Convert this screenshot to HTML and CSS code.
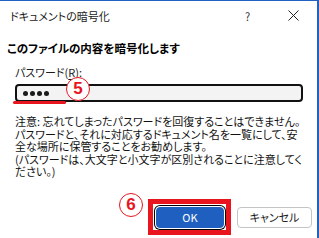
FILE: index.html
```html
<!DOCTYPE html>
<html lang="ja">
<head>
<meta charset="utf-8">
<link rel="stylesheet" href="styles.css">
</head>
<body>
<div class="window">
  <header class="titlebar">
    <span class="title">ドキュメントの暗号化</span>
    <span class="help">?</span>
    <span class="close"><svg width="11" height="11" viewBox="0 0 11 11"><path d="M0.5 0.5 L10.5 10.5 M10.5 0.5 L0.5 10.5" stroke="#222" stroke-width="1" fill="none"/></svg></span>
  </header>
  <main class="content">
    <h1 class="heading">このファイルの内容を暗号化します</h1>
    <div class="group">
      <label class="label">パスワード(<u>R</u>):</label>
      <div class="field"><span class="dot"></span><span class="dot"></span><span class="dot"></span><span class="dot"></span></div>
      <p class="note">注意: 忘れてしまったパスワードを回復することはできません。<br>パスワードと、それに対応するドキュメント名を一覧にして、安<br>全な場所に保管することをお勧めします。<br>(パスワードは、大文字と小文字が区別されることに注意してく<br>ださい。)</p>
    </div>
    <div class="buttons">
      <button class="btn ok">OK</button>
      <button class="btn cancel">キャンセル</button>
    </div>
  </main>
  <span class="mark underline"></span>
  <span class="mark circle c5">5</span>
  <span class="mark circle c6">6</span>
  <span class="mark okbox"></span>
</div>
</body>
</html>
```
FILE: styles.css
```css
html, body {
  margin: 0;
  padding: 0;
  background: #fff;
}
body {
  width: 319px;
  height: 238px;
  overflow: hidden;
  font-family: "Noto Sans CJK JP", "Noto Sans", sans-serif;
  color: #000;
}
.window {
  position: relative;
  box-sizing: border-box;
  width: 319px;
  height: 238px;
  border-top: 1px solid #1f62c2;
  border-right: 2px solid #1f62c2;
  background: #fff;
}
.titlebar {
  display: flex;
  align-items: center;
  height: 29px;
  padding-left: 10px;
}
.title {
  font-size: 11px;
  font-feature-settings: "palt";
  color: #1a1a1a;
  flex: 1;
}
.help {
  font-size: 11px;
  color: #333;
  width: 10px;
  margin-right: 33px;
}
.close {
  display: flex;
  width: 11px;
  margin-right: 18px;
}
.content {
  padding: 0 5px 0 7px;
}
.heading {
  margin: 10px 0 0 0;
  font-size: 11.5px;
  line-height: 16px;
  font-weight: bold;
  font-feature-settings: "palt";
}
.group {
  padding-left: 8px;
}
.label {
  display: block;
  margin-top: 9px;
  font-size: 11px;
  line-height: 14px;
  font-feature-settings: "palt";
  color: #1a1a1a;
}
.label u {
  text-underline-offset: 2px;
}
.field {
  box-sizing: border-box;
  margin-top: 5px;
  width: 288px;
  height: 18px;
  border: 2px solid #111;
  border-radius: 4px;
  background: #f3f3f3;
  display: flex;
  align-items: center;
  gap: 2px;
  padding-left: 6px;
}
.dot {
  width: 5px;
  height: 5px;
  border-radius: 50%;
  background: #1a1a1a;
}
.note {
  margin: 13px 0 0 0;
  font-size: 11px;
  line-height: 12.5px;
  white-space: nowrap;
  font-feature-settings: "palt";
  color: #111;
}
.buttons {
  display: flex;
  justify-content: flex-end;
  align-items: center;
  gap: 13px;
  margin-top: 29px;
}
.btn {
  box-sizing: border-box;
  height: 21px;
  padding: 0;
  font-family: "Noto Sans CJK JP", "Noto Sans", sans-serif;
  font-size: 11px;
  border-radius: 4px;
}
.ok {
  width: 68px;
  background: #1f5fbf;
  border: 1px solid #1f5fbf;
  color: #fff;
  box-shadow: 0 0 0 1px #fff, 0 0 0 2px #000;
}
.cancel {
  width: 75px;
  background: #fff;
  border: 1px solid #c4c4c4;
  color: #1a1a1a;
  font-feature-settings: "palt";
}
.mark {
  position: absolute;
}
.underline {
  left: 13px;
  top: 100px;
  width: 53px;
  height: 3px;
  border-radius: 2px;
  background: #e8141e;
}
.circle {
  box-sizing: border-box;
  width: 24px;
  height: 24px;
  border: 1.5px solid #e8141e;
  border-radius: 50%;
  color: #e8141e;
  font-family: "Liberation Sans", sans-serif;
  font-weight: bold;
  font-size: 17px;
  line-height: 21px;
  text-align: center;
  background: #fff;
}
.c5 {
  left: 66px;
  top: 76px;
}
.c6 {
  left: 119px;
  top: 192px;
}
.okbox {
  box-sizing: border-box;
  left: 148px;
  top: 198px;
  width: 83px;
  height: 36px;
  border: 5px solid #e8141e;
}
```
